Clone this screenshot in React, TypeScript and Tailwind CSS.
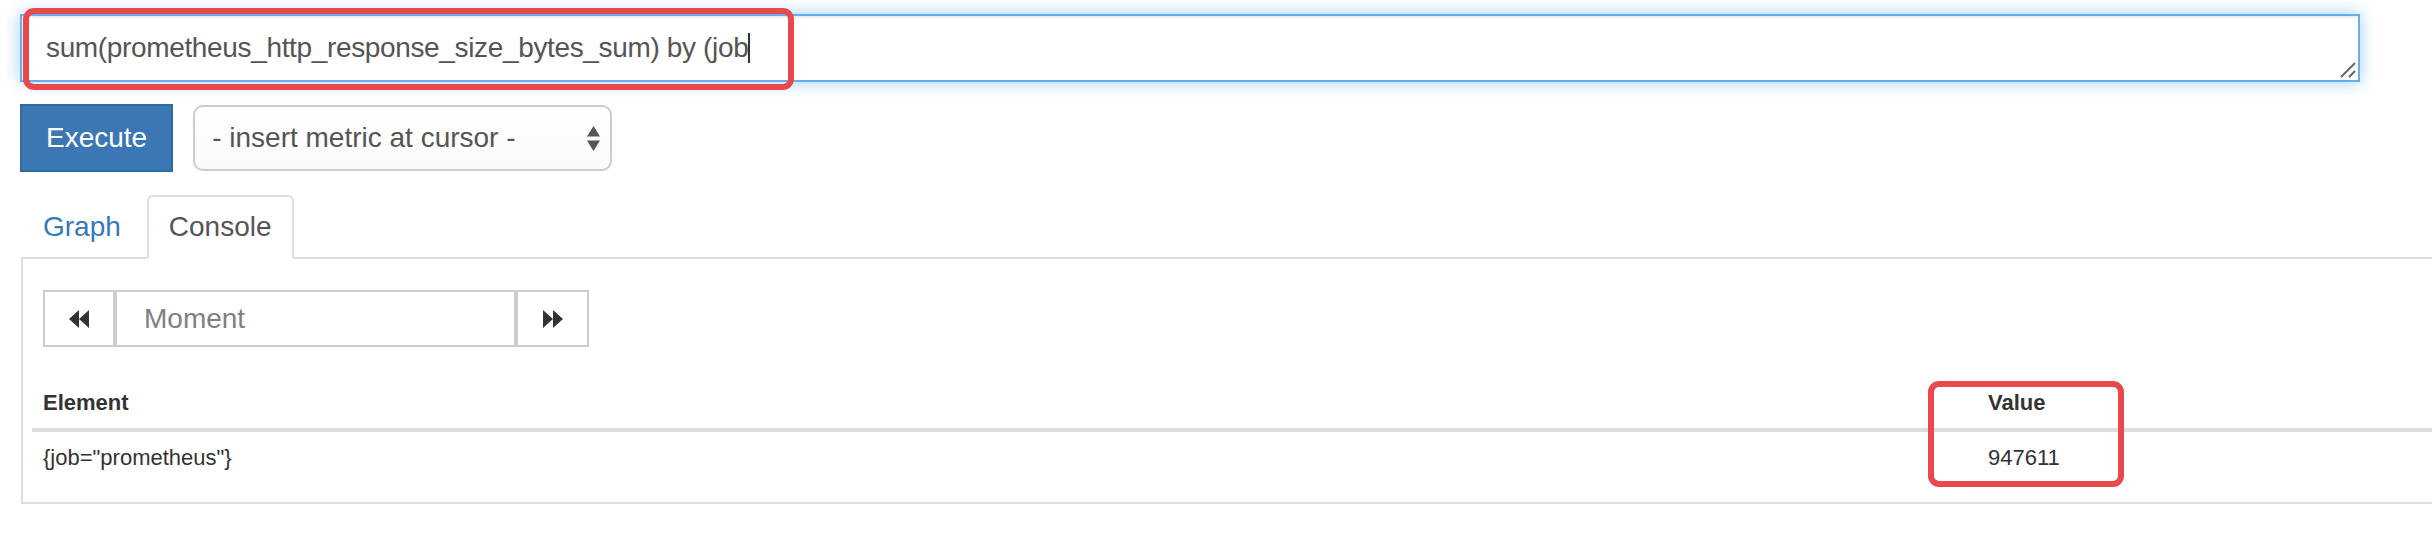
import React from 'react';

const BackIcon = () => (
  <svg width="20" height="18" viewBox="0 0 20 18" className="fill-[#333]">
    <polygon points="10,0 0,9 10,18" />
    <polygon points="20,0 10,9 20,18" />
  </svg>
);

const ForwardIcon = () => (
  <svg width="20" height="18" viewBox="0 0 20 18" className="fill-[#333]">
    <polygon points="0,0 10,9 0,18" />
    <polygon points="10,0 20,9 10,18" />
  </svg>
);

const SelectArrows = () => (
  <svg width="13" height="25" viewBox="0 0 13 25" className="fill-[#555]">
    <polygon points="0,10.5 6.5,0 13,10.5" />
    <polygon points="0,14.5 6.5,25 13,14.5" />
  </svg>
);

export default function App() {
  const query = 'sum(prometheus_http_response_size_bytes_sum) by (job';

  return (
    <div className="relative w-[2432px] h-[534px] overflow-hidden bg-white pt-[14px] pl-[20px] font-['Liberation_Sans',Arial,sans-serif]">
      {/* expression input */}
      <div className="relative w-[2340px] h-[68px] border-2 border-[#66afe9] bg-white px-[24px] py-[12px] shadow-[inset_0_2px_2px_rgba(0,0,0,0.075),0_0_16px_rgba(102,175,233,0.6)]">
        <div className="flex items-center text-[28px] leading-[40px] tracking-[-0.35px] text-[#555] whitespace-nowrap">
          {query}
          <span className="inline-block w-[2px] h-[30px] bg-[#333]" />
        </div>
        <svg width="16" height="16" viewBox="0 0 16 16" className="absolute right-[2px] bottom-[2px] stroke-[#666]">
          <line x1="1" y1="15" x2="15" y2="1" strokeWidth="2" />
          <line x1="9" y1="15" x2="15" y2="9" strokeWidth="2" />
        </svg>
      </div>

      {/* execute + metric select */}
      <div className="mt-[22px] flex items-center">
        <button className="h-[68px] px-[24px] border-2 border-[#2e6da4] bg-[#3a77b3] text-white text-[28px] leading-[40px]">
          Execute
        </button>
        <div className="ml-[20px] w-[419px] h-[66px] flex items-center justify-between pl-[17px] pr-[10px] border-2 border-[#ccc] rounded-[10px] bg-gradient-to-b from-white to-[#fafafa] text-[28px] text-[#555] whitespace-nowrap">
          <span>- insert metric at cursor -</span>
          <SelectArrows />
        </div>
      </div>

      {/* tabs */}
      <ul className="mt-[23px] ml-px flex border-b-2 border-[#ddd] text-[28px] leading-[40px]">
        <li className="-mb-[2px] mr-[4px]">
          <a className="block px-[20px] py-[10px] border-2 border-transparent text-[#337ab7]">Graph</a>
        </li>
        <li className="-mb-[2px]">
          <a className="block px-[20px] py-[10px] border-2 border-[#ddd] border-b-transparent rounded-t-[6px] bg-white text-[#555]">
            Console
          </a>
        </li>
      </ul>

      {/* console panel */}
      <div className="ml-px border-l-2 border-b-2 border-[#ddd] pl-[9px] pt-[31px] pb-[19px]">
        <div className="ml-[11px] flex h-[57px] w-[546px]">
          <button className="w-[72px] h-full flex items-center justify-center border-2 border-[#ccc] bg-white">
            <BackIcon />
          </button>
          <div className="flex-1 h-full flex items-center pl-[27px] border-2 border-[#ccc] text-[28px] text-[#808080]">
            Moment
          </div>
          <button className="w-[73px] h-full flex items-center justify-center border-2 border-[#ccc] bg-white">
            <ForwardIcon />
          </button>
        </div>

        <table className="mt-[30px] w-full border-collapse text-[22px] leading-[31px] text-[#333]">
          <thead>
            <tr>
              <th className="w-[1945px] px-[11px] py-[10px] text-left font-bold border-b-4 border-[#ddd]">Element</th>
              <th className="px-[11px] py-[10px] text-left font-bold border-b-4 border-[#ddd]">Value</th>
            </tr>
          </thead>
          <tbody>
            <tr>
              <td className="px-[11px] py-[10px]">{'{job="prometheus"}'}</td>
              <td className="px-[11px] py-[10px]">947611</td>
            </tr>
          </tbody>
        </table>
      </div>

      {/* annotation boxes */}
      <div className="absolute left-[23px] top-[8px] w-[771px] h-[82px] border-[6px] border-[#e9484c] rounded-[11px]" />
      <div className="absolute left-[1928px] top-[381px] w-[196px] h-[106px] border-[6px] border-[#e9484c] rounded-[11px]" />
    </div>
  );
}
